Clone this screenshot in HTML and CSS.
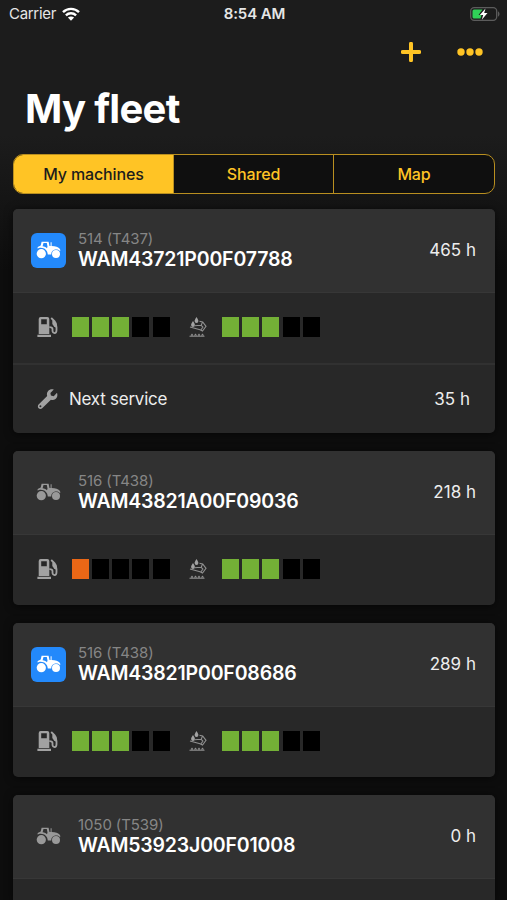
FILE: index.html
```html
<!DOCTYPE html>
<html lang="en">
<head>
    <meta charset="UTF-8">
    <meta name="viewport" content="width=device-width, initial-scale=1.0">
    <title>My fleet</title>
    <link rel="stylesheet" href="styles.css">
</head>
<body>
    <!-- shared icons -->
    <svg class="icon-defs" width="0" height="0">
        <symbol id="tractor" viewBox="0 0 25 18">
            <circle cx="5.3" cy="12.7" r="4.6"/>
            <circle cx="20" cy="12.9" r="4"/>
            <path fill-rule="evenodd" d="M5.6.7h7l.9 4.2h1.1V1.2h1v3.7c4.2 0 6.4.8 7.900 2.700l1 1.700-.7.6c-2.200-2.200-5.900-1.900-7.600.4-.8 1-.9 2.200-.9 3.300h-3.500C11.700 9.200 8.300 6.300 3.800 6.700l-2.300.8.2-1.600 3-1.300zM7.500 2.100l-.9 3.100c2 .2 3.300.9 4.400 2l.5-1.800-.7-3.300z"/>
        </symbol>
        <symbol id="fuel" viewBox="0 0 21 20">
            <path fill-rule="evenodd" d="M3.700 0h6.600a2 2 0 0 1 2 2v15H1.700V2a2 2 0 0 1 2-2zM4.200 2.300v5h5.600v-5z"/>
            <path d="M.4 17.800h13.600V20H.4z"/>
            <path class="hose" d="M14.200 1l3.300 3.200c1.500 1.500 2 3.300 2 6v3c0 3.700-4 3.700-4 .5v-1.700c0-1.200-.8-1.800-3.200-1.800"/>
            <path d="M15.300 3l2.700 1.500 1.500 2.500v4l-2.500-1.500-1.700-2.500z"/>
        </symbol>
        <symbol id="adblue" viewBox="0 0 18 20">
            <path d="M7.500 0c1.200 2 1.900 3 1.900 4.100a1.900 1.900 0 0 1-3.800 0C5.600 3 6.300 2 7.500 0zM4 4c1.200 1.900 1.900 2.900 1.900 4a1.900 1.900 0 0 1-3.800 0C2.100 6.900 2.800 5.900 4 4z"/>
            <path class="thin" d="M10.500 4.200l3.200.8 3.300 4.300-3.500 4.700-2.500-1.200L1 10M5.500 8.800l6.500-.5M13.500 5l-1.300 3.300 1.700 1.700-2 3"/>
            <path class="thin" d="M.5 19.300h15M2 18.500l1-1.200 1 1.200M5.500 18.500l1-1.200 1 1.200M9 18.500l1-1.200 1 1.200M12.500 18.500l1-1.200 1 1.200"/>
        </symbol>
        <symbol id="wrench" viewBox="0 0 20 20">
            <path fill-rule="evenodd" d="M16.300.5l-3.400 3.400.5 2.700 2.800.6 3.300-3.400c.9 2.600.2 4.900-1.500 6.200-1.400 1-2.900 1.200-4.600.7L4.700 19.200c-1 .9-2.600.9-3.600 0-1-1-1-2.600 0-3.600l8.600-8.500c-.6-1.900-.3-3.600.9-5C12 .3 14.200-.2 16.300.5zM2.900 16.200a1 1 0 1 0 0 2 1 1 0 0 0 0-2z"/>
        </symbol>
    </svg>

    <div class="status-bar">
        <div class="carrier">
            <span>Carrier</span>
            <svg class="wifi" viewBox="0 0 18 14">
                <path d="M1 5.200c4.400-4.400 11.600-4.400 16 0M3.900 8.300c2.900-2.800 7.300-2.800 10.200 0"/>
                <path class="dot" d="M9 13.800L5.900 10.600c1.700-1.600 4.500-1.600 6.200 0z"/>
            </svg>
        </div>
        <span class="time">8:54 AM</span>
        <svg class="battery" viewBox="0 0 30 14">
            <rect class="shell" x=".7" y=".7" width="26" height="12.600" rx="3.500"/>
            <path class="tip" d="M28 4.500c2 .6 2 4.400 0 5z"/>
            <path class="charge" d="M4 2.500h8.500L8.500 8h3l-1 3.500H4A1.500 1.500 0 0 1 2.500 10V4A1.500 1.500 0 0 1 4 2.500z"/>
            <path class="bolt" d="M15.500 1.500L9.800 8h3.400l-1.400 4.700L17.500 6h-3.300z"/>
        </svg>
    </div>

    <div class="toolbar">
        <svg class="plus" viewBox="0 0 20 20"><path d="M10 1.700v16.600M1.700 10h16.600"/></svg>
        <svg class="more" viewBox="0 0 26 8">
            <circle cx="4" cy="4" r="3.700"/>
            <circle cx="13" cy="4" r="3.700"/>
            <circle cx="22" cy="4" r="3.700"/>
        </svg>
    </div>

    <h1 class="title">My fleet</h1>

    <div class="tabs">
        <div class="tab active">My machines</div>
        <div class="tab">Shared</div>
        <div class="tab">Map</div>
    </div>

    <div class="machines">
        <div class="card">
            <div class="card-head">
                <div class="machine-icon online"><svg><use href="#tractor"/></svg></div>
                <div class="machine-name">
                    <p class="model">514 (T437)</p>
                    <p class="serial">WAM43721P00F07788</p>
                </div>
                <span class="hours">465 h</span>
            </div>
            <div class="levels">
                <svg class="fuel-icon"><use href="#fuel"/></svg>
                <div class="gauge"><i class="ok"></i><i class="ok"></i><i class="ok"></i><i></i><i></i></div>
                <svg class="adblue-icon"><use href="#adblue"/></svg>
                <div class="gauge"><i class="ok"></i><i class="ok"></i><i class="ok"></i><i></i><i></i></div>
            </div>
            <div class="service">
                <svg class="wrench-icon"><use href="#wrench"/></svg>
                <span class="service-label">Next service</span>
                <span class="hours">35 h</span>
            </div>
        </div>

        <div class="card">
            <div class="card-head">
                <div class="machine-icon"><svg><use href="#tractor"/></svg></div>
                <div class="machine-name">
                    <p class="model">516 (T438)</p>
                    <p class="serial">WAM43821A00F09036</p>
                </div>
                <span class="hours">218 h</span>
            </div>
            <div class="levels">
                <svg class="fuel-icon"><use href="#fuel"/></svg>
                <div class="gauge"><i class="low"></i><i></i><i></i><i></i><i></i></div>
                <svg class="adblue-icon"><use href="#adblue"/></svg>
                <div class="gauge"><i class="ok"></i><i class="ok"></i><i class="ok"></i><i></i><i></i></div>
            </div>
        </div>

        <div class="card">
            <div class="card-head">
                <div class="machine-icon online"><svg><use href="#tractor"/></svg></div>
                <div class="machine-name">
                    <p class="model">516 (T438)</p>
                    <p class="serial">WAM43821P00F08686</p>
                </div>
                <span class="hours">289 h</span>
            </div>
            <div class="levels">
                <svg class="fuel-icon"><use href="#fuel"/></svg>
                <div class="gauge"><i class="ok"></i><i class="ok"></i><i class="ok"></i><i></i><i></i></div>
                <svg class="adblue-icon"><use href="#adblue"/></svg>
                <div class="gauge"><i class="ok"></i><i class="ok"></i><i class="ok"></i><i></i><i></i></div>
            </div>
        </div>

        <div class="card last">
            <div class="card-head">
                <div class="machine-icon"><svg><use href="#tractor"/></svg></div>
                <div class="machine-name">
                    <p class="model">1050 (T539)</p>
                    <p class="serial">WAM53923J00F01008</p>
                </div>
                <span class="hours">0 h</span>
            </div>
        </div>
    </div>
</body>
</html>
```
FILE: styles.css
```css
* {
    box-sizing: border-box;
}

body {
    margin: 0;
    height: 900px;
    overflow: hidden;
    display: flex;
    flex-direction: column;
    background: linear-gradient(#1c1c1c 0, #1c1c1c 135px, #0d0d0d 270px);
    color: #fff;
    font-family: 'Inter', sans-serif;
}

.icon-defs {
    display: none;
}

p {
    margin: 0;
}

.status-bar {
    flex: none;
    display: grid;
    grid-template-columns: 1fr auto 1fr;
    align-items: center;
    height: 27px;
    padding: 0 7px 0 9px;
    font-size: 15px;
    line-height: 20px;
    color: #e6e6e6;
}

.carrier {
    display: flex;
    align-items: center;
    gap: 6px;
    letter-spacing: -0.3px;
}

.wifi {
    width: 18px;
    height: 14px;
    fill: none;
    stroke: #fff;
    stroke-width: 2.4;
}

.wifi .dot {
    fill: #fff;
    stroke: none;
}

.time {
    font-weight: 600;
    letter-spacing: -0.1px;
}

.battery {
    justify-self: end;
    width: 30px;
    height: 14px;
}

.shell {
    fill: none;
    stroke: #5c5c5c;
    stroke-width: 1.3;
}

.tip {
    fill: #5c5c5c;
}

.charge {
    fill: #30d158;
}

.bolt {
    fill: #fff;
}

.toolbar {
    flex: none;
    display: flex;
    align-items: center;
    justify-content: flex-end;
    gap: 36px;
    height: 49px;
    padding-right: 24px;
}

.plus {
    width: 20px;
    height: 20px;
    stroke: #ffc425;
    stroke-width: 4;
    stroke-linecap: round;
}

.more {
    width: 26px;
    height: 8px;
    fill: #ffc425;
}

.title {
    flex: none;
    margin: 0;
    padding-left: 25px;
    height: 78px;
    font-size: 40px;
    line-height: 66px;
    font-weight: 700;
    letter-spacing: -0.7px;
}

.tabs {
    flex: none;
    display: grid;
    grid-template-columns: 159px 160px 1fr;
    height: 40px;
    margin: 0 12px 14.5px 13px;
    border: 1px solid #b98f20;
    border-radius: 10px;
    background: #0f0f0f;
    overflow: hidden;
}

.tab {
    display: flex;
    align-items: center;
    justify-content: center;
    font-size: 16px;
    font-weight: 500;
    letter-spacing: -0.15px;
    color: #ffc425;
}

.tab + .tab {
    border-left: 1px solid #b98f20;
}

.tab.active {
    background: #ffc425;
    color: #1c1c1c;
}

.machines {
    flex: 1;
    min-height: 0;
    display: flex;
    flex-direction: column;
    gap: 18px;
    margin: 0 12px 0 13px;
}

.card {
    flex: none;
    border-radius: 5px;
    background: #282828;
    box-shadow: 0 1px 8px rgba(0, 0, 0, 0.6);
    overflow: hidden;
}

.card.last {
    flex: 1;
    border-radius: 5px 5px 0 0;
}

.card-head {
    display: flex;
    align-items: center;
    height: 84.5px;
    padding: 0 19px 0 18px;
    background: #313131;
    border-bottom: 1px solid #373737;
}

.machine-icon {
    display: flex;
    align-items: center;
    justify-content: center;
    width: 35px;
    height: 35px;
    border-radius: 6px;
    fill: #999;
}

.machine-icon.online {
    background: #2389fb;
    fill: #fff;
}

.machine-icon svg {
    width: 25px;
    height: 18px;
}

.machine-name {
    flex: 1;
    padding: 0 0 0 12px;
}

.model {
    font-size: 15px;
    line-height: 18px;
    letter-spacing: -0.1px;
    color: #868686;
}

.serial {
    font-size: 19.5px;
    line-height: 23px;
    font-weight: 600;
    letter-spacing: -0.18px;
}

.hours {
    font-size: 17px;
    color: #ededed;
}

.levels {
    display: flex;
    align-items: center;
    height: 69.5px;
    padding: 0 0 1px 24px;
}

.fuel-icon,
.wrench-icon {
    width: 21px;
    height: 20px;
    fill: #a2a2a2;
}

.hose {
    fill: none;
    stroke: #a2a2a2;
    stroke-width: 1.8;
}

.adblue-icon {
    width: 18px;
    height: 20px;
    margin: 0 15px 0 19px;
    fill: #a2a2a2;
}

.thin {
    fill: none;
    stroke: #8f8f8f;
    stroke-width: 1.1;
}

.fuel-icon + .gauge {
    margin-left: 13.5px;
}

.gauge {
    display: flex;
    gap: 3.3px;
}

.gauge i {
    width: 17px;
    height: 20px;
    background: #000;
}

.gauge .ok {
    background: #73b036;
}

.gauge .low {
    background: #ea6716;
}

.service {
    display: flex;
    align-items: center;
    height: 70px;
    padding: 0 25px 0 24px;
    border-top: 2px solid #313131;
}

.service-label {
    flex: 1;
    padding-left: 11px;
    font-size: 17px;
    letter-spacing: -0.25px;
    color: #ededed;
}
```
